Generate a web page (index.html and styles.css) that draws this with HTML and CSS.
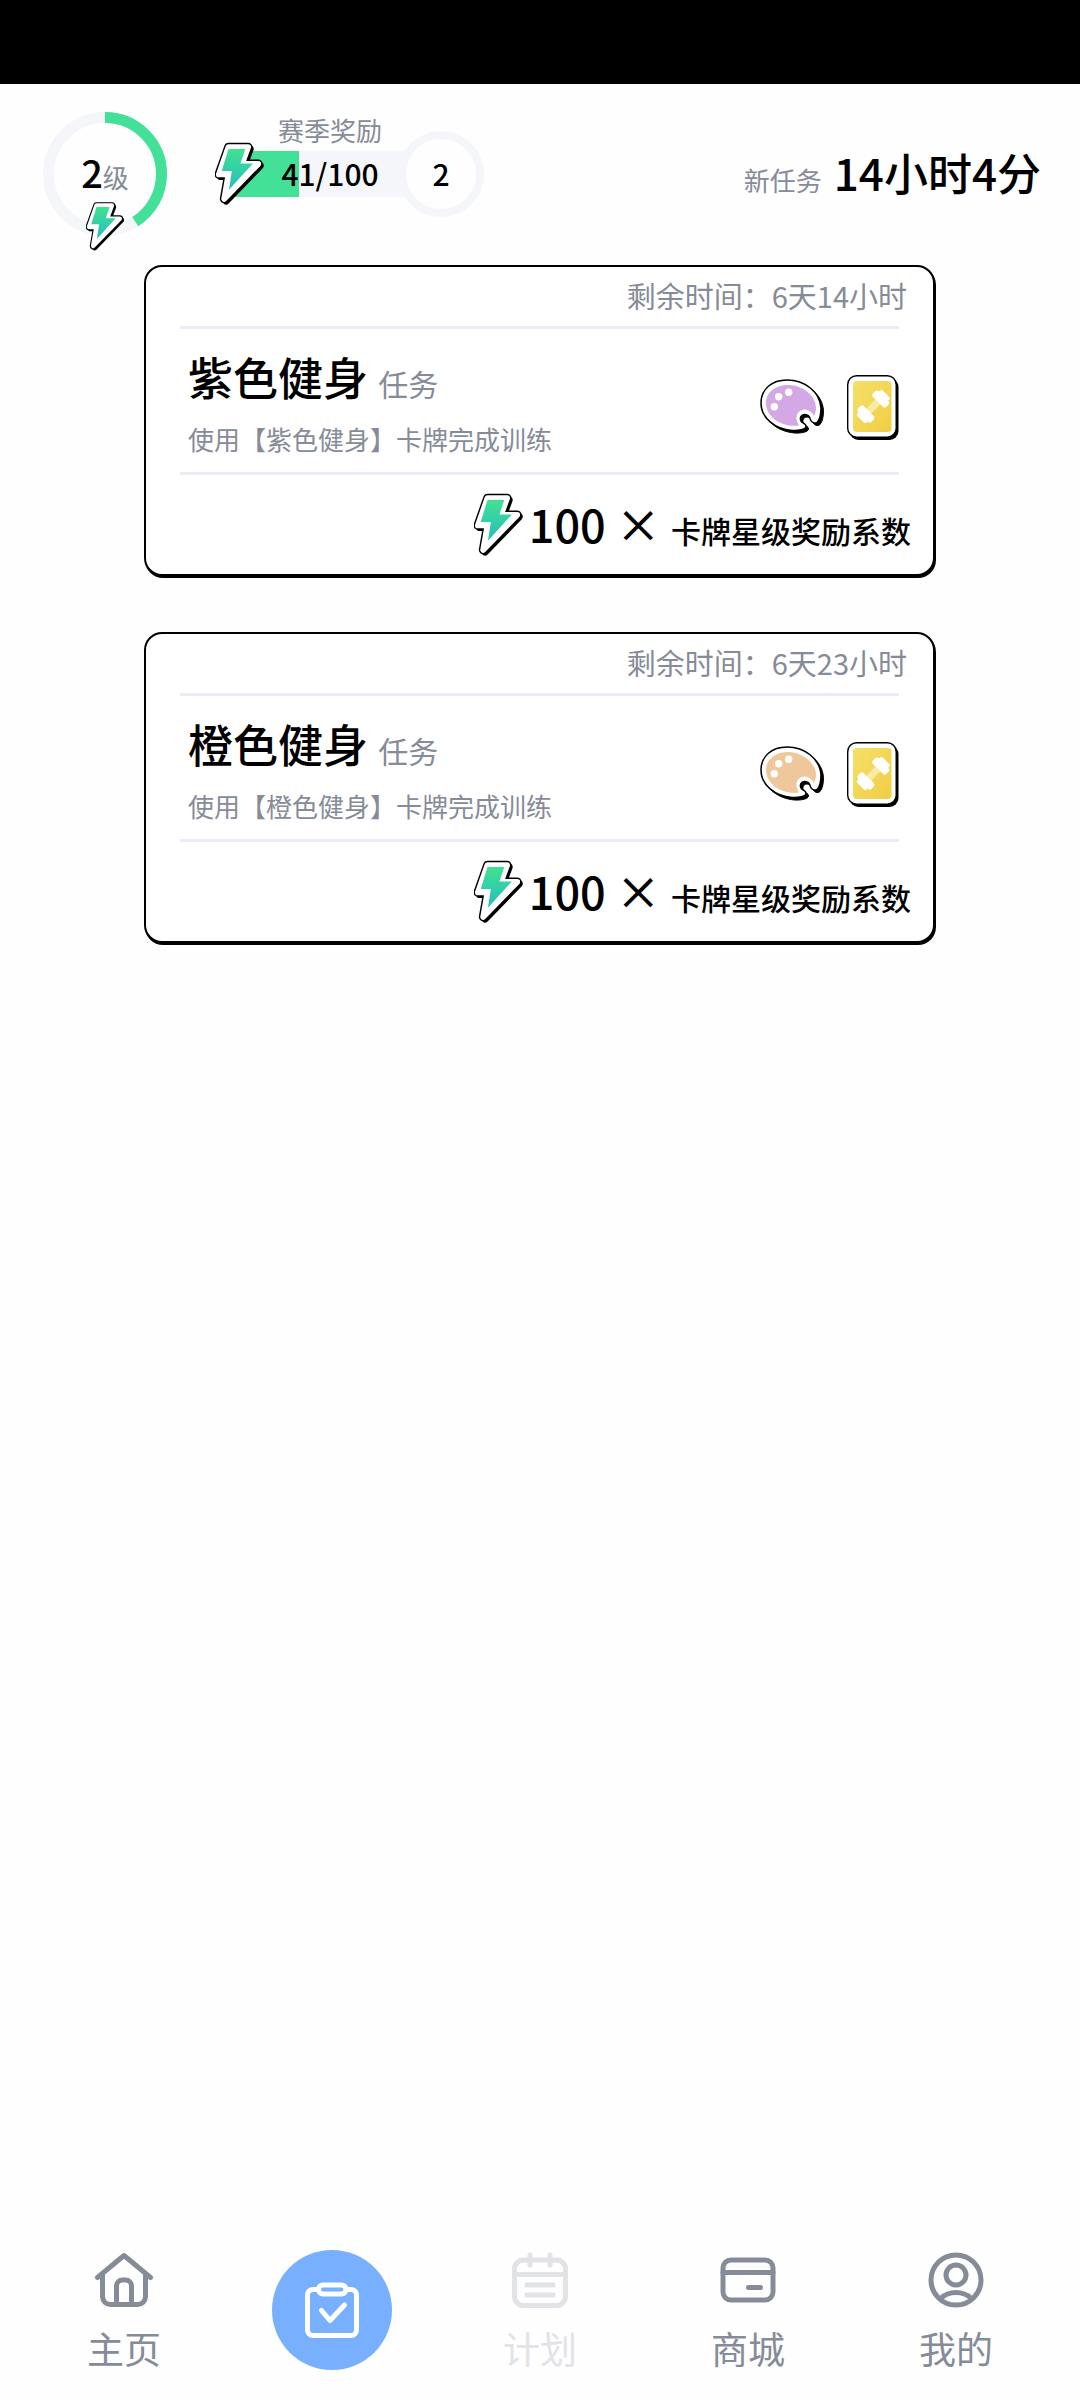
FILE: index.html
```html
<!DOCTYPE html>
<html lang="zh-CN">
<head>
<meta charset="utf-8">
<meta name="viewport" content="width=device-width, initial-scale=1">
<title>任务</title>
<link rel="stylesheet" href="styles.css">
</head>
<body>
<svg class="sprite" aria-hidden="true">
  <defs>
    <linearGradient id="bolt-fill" x1="0" y1="0" x2="0" y2="1">
      <stop offset="0" stop-color="#40e290"/>
      <stop offset="1" stop-color="#27bcc0"/>
    </linearGradient>
    <linearGradient id="gold-fill" x1="0" y1="0" x2="1" y2="1">
      <stop offset="0" stop-color="#f5e068"/>
      <stop offset="1" stop-color="#f1cd45"/>
    </linearGradient>
    <path id="bolt-body" d="M14 4.5H34.5L28 22H45L9.5 58.5L14 33H4Z"/>
    <path id="palette-body" d="M27 1C45 1 60 13 61 29C61 35 60 40 57.500 43C55 45 52 44 50.500 41C50 38 48 35.500 44.500 35.500C41 35.500 39.500 39 41 42C42.500 44.500 46 44.500 46 47.500C46 50.500 38 52 32 51.500C15 50 1 39 1 24C1 10 12 1 27 1Z"/>
    <symbol id="bolt" viewBox="0 0 52 65">
      <g stroke-linejoin="round">
        <use href="#bolt-body" x="2" y="2" fill="#000" stroke="#000" stroke-width="7.500"/>
        <use href="#bolt-body" fill="#000" stroke="#000" stroke-width="9"/>
        <use href="#bolt-body" fill="#fff" stroke="#fff" stroke-width="6"/>
      </g>
      <path fill="url(#bolt-fill)" d="M14 6.500H31.500L26.500 21.500H39.500L14.500 49L17.500 29.500H7Z"/>
    </symbol>
    <symbol id="palette" viewBox="0 0 65 56">
      <use href="#palette-body" x="2.500" y="2.500" fill="#000" stroke="#000"/>
      <use href="#palette-body" fill="#fff" stroke="#000" stroke-width="1.500"/>
      <path fill="currentColor" d="M28 6C43 6 56 17 56 29C56 32 55 34.500 54 37C52 33 48.500 30.500 44.500 30.500C38 31 35 37 37 42C37.500 44 39 45.500 39 46.500C22 49 6 38 6 24C6 13 16 6 28 6Z"/>
      <g fill="#fff"><circle cx="18.700" cy="17.700" r="3.700"/><circle cx="28.700" cy="13.300" r="3.700"/><circle cx="14.300" cy="27.700" r="3.700"/></g>
    </symbol>
    <symbol id="gym-card" viewBox="0 0 52 65">
      <rect x="2.500" y="3" width="49" height="62" rx="9"/>
      <rect x=".7" y=".7" width="48.500" height="61.500" rx="9" fill="#fff" stroke="#000" stroke-width="1.400"/>
      <rect x="6" y="6" width="38.500" height="51" rx="4" fill="url(#gold-fill)"/>
      <g transform="translate(26.300 31.500) rotate(-45)">
        <rect x="-8" y="-3.500" width="16" height="7" fill="#f8eba5"/>
        <g fill="#fff">
          <rect x="6.500" y="-9.500" width="8" height="19" rx="2.500"/>
          <rect x="12" y="-6.500" width="6" height="13" rx="2"/>
          <rect x="-14.500" y="-9.500" width="8" height="19" rx="2.500"/>
          <rect x="-18" y="-6.500" width="6" height="13" rx="2"/>
        </g>
      </g>
    </symbol>
  </defs>
</svg>

<div class="status-bar"></div>

<header class="summary">
  <div class="level">
    <svg class="level-ring" viewBox="0 0 124 124" aria-hidden="true">
      <circle class="ring-track" cx="62" cy="62" r="56.500"/>
      <circle class="ring-value" cx="62" cy="62" r="56.500" pathLength="100" stroke-dasharray="41 100" transform="rotate(-90 62 62)"/>
    </svg>
    <p class="level-text"><span class="level-number">2</span><span class="level-unit">级</span></p>
    <svg class="level-bolt" aria-hidden="true"><use href="#bolt"/></svg>
  </div>

  <div class="season">
    <svg class="bolt season-bolt" aria-hidden="true"><use href="#bolt"/></svg>
    <div class="season-main">
      <p class="season-label">赛季奖励</p>
      <div class="season-bar" role="progressbar" aria-label="赛季奖励" aria-valuenow="41" aria-valuemin="0" aria-valuemax="100">
        <div class="season-fill" style="width: 41%"></div>
        <span class="season-value">41/100</span>
      </div>
    </div>
    <div class="season-tier">2</div>
  </div>

  <p class="refresh"><span class="refresh-label">新任务</span><strong class="refresh-time">14小时4分</strong></p>
</header>

<main class="tasks">
  <article class="task">
    <p class="task-time">剩余时间：6天14小时</p>
    <div class="task-body">
      <div class="task-text">
        <h2 class="task-title">紫色健身 <small class="task-kind">任务</small></h2>
        <p class="task-desc">使用【紫色健身】卡牌完成训练</p>
      </div>
      <div class="task-icons">
        <svg class="palette palette-purple" aria-hidden="true"><use href="#palette"/></svg>
        <svg class="gym-card" aria-hidden="true"><use href="#gym-card"/></svg>
      </div>
    </div>
    <div class="task-reward">
      <svg class="bolt" aria-hidden="true"><use href="#bolt"/></svg>
      <p class="reward-text">100 × <span class="reward-factor">卡牌星级奖励系数</span></p>
    </div>
  </article>

  <article class="task">
    <p class="task-time">剩余时间：6天23小时</p>
    <div class="task-body">
      <div class="task-text">
        <h2 class="task-title">橙色健身 <small class="task-kind">任务</small></h2>
        <p class="task-desc">使用【橙色健身】卡牌完成训练</p>
      </div>
      <div class="task-icons">
        <svg class="palette palette-orange" aria-hidden="true"><use href="#palette"/></svg>
        <svg class="gym-card" aria-hidden="true"><use href="#gym-card"/></svg>
      </div>
    </div>
    <div class="task-reward">
      <svg class="bolt" aria-hidden="true"><use href="#bolt"/></svg>
      <p class="reward-text">100 × <span class="reward-factor">卡牌星级奖励系数</span></p>
    </div>
  </article>
</main>

<nav class="tabs" aria-label="主导航">
  <a class="tab" href="#home">
    <svg class="tab-icon" viewBox="0 0 72 72" aria-hidden="true">
      <path d="M9.500 33.500L36 11.500L62.500 33.500M14.500 30V52.500a8 8 0 0 0 8 8h27a8 8 0 0 0 8-8V30M28.500 60V42a6 6 0 0 1 6-6h3a6 6 0 0 1 6 6V60"/>
    </svg>
    <span>主页</span>
  </a>
  <a class="tab" href="#tasks" aria-label="任务" aria-current="page">
    <span class="tab-active">
      <svg class="tab-icon" viewBox="0 0 72 72" aria-hidden="true">
        <path d="M22 15.500H17a5.500 5.500 0 0 0-5.500 5.500V56a5.500 5.500 0 0 0 5.500 5.500H55a5.500 5.500 0 0 0 5.500-5.500V21a5.500 5.500 0 0 0-5.500-5.500H50"/>
        <rect x="22.500" y="11" width="27.500" height="9" rx="4.500"/>
        <path d="M25.500 36.500L34 46.500L48.500 31"/>
      </svg>
    </span>
  </a>
  <a class="tab tab-disabled" href="#plan" aria-disabled="true">
    <svg class="tab-icon" viewBox="0 0 72 72" aria-hidden="true">
      <rect x="10.500" y="16" width="51" height="45.500" rx="9"/>
      <path d="M26 11V21M46 11V21M11 30.500H61M23 41H49M23 51H49"/>
    </svg>
    <span>计划</span>
  </a>
  <a class="tab" href="#shop">
    <svg class="tab-icon" viewBox="0 0 72 72" aria-hidden="true">
      <rect x="11" y="16" width="50" height="40" rx="8"/>
      <path d="M11 28.500H61M36.500 43.500H48.500"/>
    </svg>
    <span>商城</span>
  </a>
  <a class="tab" href="#me">
    <svg class="tab-icon" viewBox="0 0 72 72" aria-hidden="true">
      <circle cx="36" cy="36" r="25"/>
      <circle cx="36" cy="31" r="10"/>
      <path d="M20.500 54.500Q27 48.500 36 48.500T51.500 54.500"/>
    </svg>
    <span>我的</span>
  </a>
</nav>
</body>
</html>
```
FILE: styles.css
```css
* {
  box-sizing: border-box;
}

body {
  display: flex;
  flex-direction: column;
  min-height: 100vh;
  margin: 0;
  background: #fefefe;
  color: #000;
  font-family: "Noto Sans CJK SC", sans-serif;
}

p,
h2 {
  margin: 0;
}

svg {
  display: block;
  flex: none;
}

.sprite {
  position: absolute;
  width: 0;
  height: 0;
}

.status-bar {
  height: 84px;
  background: #000;
}

.bolt {
  width: 50px;
  height: 64px;
}

/* Summary row */

.summary {
  display: flex;
  align-items: center;
  padding: 28px 39px 29px 43px;
}

.level {
  position: relative;
  display: grid;
  place-items: center;
  width: 124px;
  height: 124px;
}

.level-ring {
  grid-area: 1 / 1;
  width: 124px;
  height: 124px;
  fill: none;
  stroke-width: 11;
}

.ring-track {
  stroke: #f5f6f9;
}

.ring-value {
  stroke: #43e097;
}

.level-text {
  display: flex;
  grid-area: 1 / 1;
  align-items: baseline;
  padding-bottom: 4px;
  line-height: 56px;
}

.level-number {
  font-size: 38px;
  font-weight: 500;
}

.level-unit {
  color: #868b98;
  font-size: 26px;
  line-height: 36px;
}

.level-bolt {
  position: absolute;
  left: 43px;
  bottom: -15px;
  width: 39px;
  height: 49px;
}

.season {
  display: flex;
  align-items: center;
  margin-left: 48px;
}

.season-bolt {
  z-index: 1;
  margin-right: -40px;
}

.season-main {
  width: 180px;
  padding-bottom: 39px;
}

.season-label {
  margin-bottom: 3px;
  padding-left: 30px;
  color: #868b98;
  font-size: 26px;
  line-height: 36px;
  text-align: center;
}

.season-bar {
  display: grid;
  height: 46px;
  background: #f5f6f9;
}

.season-fill {
  grid-area: 1 / 1;
  background: #43e097;
}

.season-value {
  grid-area: 1 / 1;
  padding-left: 30px;
  font-size: 30px;
  font-weight: 500;
  line-height: 44px;
  text-align: center;
}

.season-tier {
  width: 86px;
  height: 86px;
  margin-left: -7px;
  border: 8px solid #f5f6f9;
  border-radius: 50%;
  background: #fefefe;
  font-size: 30px;
  font-weight: 500;
  line-height: 68px;
  text-align: center;
}

.refresh {
  display: flex;
  align-items: baseline;
  gap: 12px;
  margin-left: auto;
  padding-bottom: 4px;
  line-height: 56px;
}

.refresh-label {
  color: #868b98;
  font-size: 26px;
  line-height: 36px;
}

.refresh-time {
  font-size: 44px;
  font-weight: 500;
}

/* Task cards */

.tasks {
  display: flex;
  flex-direction: column;
  gap: 56px;
  padding: 0 145px 0 144px;
}

.task {
  border: 2px solid #000;
  border-radius: 18px;
  background: #fff;
  box-shadow: 1px 2px 0 #000;
}

.task-time {
  padding: 0 26px 2px;
  color: #868b98;
  font-size: 29px;
  line-height: 57px;
  text-align: right;
}

.task-body {
  display: flex;
  align-items: center;
  justify-content: space-between;
  margin: 0 34px;
  padding: 20px 0 15px 8px;
  border: solid #ebebf5;
  border-width: 3px 0;
}

.task-title {
  font-size: 45px;
  font-weight: 500;
  line-height: 56px;
}

.task-kind {
  color: #868b98;
  font-size: 30px;
  font-weight: 400;
  line-height: 36px;
}

.task-desc {
  margin-top: 16px;
  color: #868b98;
  font-size: 26px;
  line-height: 36px;
}

.task-icons {
  display: flex;
  align-items: center;
  gap: 22px;
  padding-top: 8px;
}

.palette {
  width: 65px;
  height: 56px;
}

.palette-purple {
  color: #d3a8e5;
}

.palette-orange {
  color: #eec89b;
}

.gym-card {
  width: 52px;
  height: 65px;
}

.task-reward {
  display: flex;
  align-items: center;
  justify-content: flex-end;
  gap: 5px;
  padding: 18px 22px 17px;
}

.reward-text {
  padding-bottom: 2px;
  font-size: 45px;
  font-weight: 500;
  line-height: 56px;
}

.reward-factor {
  font-size: 30px;
  line-height: 36px;
}

/* Bottom tabs */

.tabs {
  display: flex;
  align-items: flex-end;
  margin-top: auto;
  padding: 0 20px;
}

.tab {
  display: flex;
  flex: 1;
  flex-direction: column;
  align-items: center;
  gap: 8px;
  padding-bottom: 28px;
  color: #868b98;
  font-size: 37px;
  line-height: 48px;
  text-decoration: none;
}

.tab-disabled {
  color: #e2e3e7;
}

.tab-icon {
  width: 72px;
  height: 72px;
  fill: none;
  stroke: currentColor;
  stroke-width: 5;
  stroke-linecap: round;
  stroke-linejoin: round;
}

.tab-active {
  display: grid;
  place-items: center;
  width: 120px;
  height: 120px;
  margin-bottom: 2px;
  border-radius: 50%;
  background: #78b0ff;
  color: #fff;
}
```
